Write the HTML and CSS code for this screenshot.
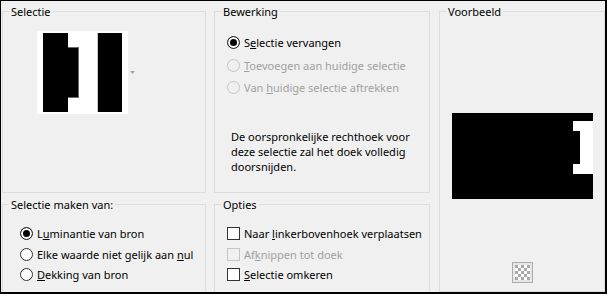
FILE: index.html
```html
<!DOCTYPE html>
<html lang="nl">
<head>
    <meta charset="UTF-8">
    <meta name="viewport" content="width=device-width, initial-scale=1.0">
    <title>Selectie uit masker</title>
    <link rel="stylesheet" href="styles.css">
</head>
<body>
    <div class="dialog">
        <div class="col col-left">
            <div class="group group-top">
                <div class="title">Selectie</div>
                <div class="thumb-row">
                    <svg class="thumb" width="91" height="83" viewBox="0 0 91 83">
                        <rect width="91" height="83" fill="#fff"/>
                        <rect x="6" y="2" width="25" height="79" fill="#000"/>
                        <rect x="31" y="16" width="11" height="51" fill="#6a6a6a"/>
                        <rect x="31" y="17" width="10" height="49" fill="#000"/>
                        <rect x="60" y="2" width="1" height="79" fill="#c8c8c8"/>
                        <rect x="61" y="2" width="24" height="79" fill="#000"/>
                    </svg>
                    <svg class="drop" width="5" height="3" viewBox="0 0 5 3">
                        <polygon points="0,0 5,0 2.5,3" fill="#a6a6a6"/>
                    </svg>
                </div>
            </div>
            <div class="group group-bottom">
                <div class="title">Selectie maken van:</div>
                <div class="list list-source">
                    <div class="opt"><span class="radio on"></span><span>L<u>u</u>minantie van bron</span></div>
                    <div class="opt"><span class="radio"></span><span>Elke waarde niet gelijk aan <u>n</u>ul</span></div>
                    <div class="opt"><span class="radio"></span><span><u>D</u>ekking van bron</span></div>
                </div>
            </div>
        </div>

        <div class="col col-mid">
            <div class="group group-top">
                <div class="title">Bewerking</div>
                <div class="list list-edit">
                    <div class="opt"><span class="radio on"></span><span>S<u>e</u>lectie vervangen</span></div>
                    <div class="opt off"><span class="radio"></span><span><u>T</u>oevoegen aan huidige selectie</span></div>
                    <div class="opt off"><span class="radio"></span><span>Van <u>h</u>uidige selectie aftrekken</span></div>
                </div>
                <p class="note">De oorspronkelijke rechthoek voor<br>deze selectie zal het doek volledig<br>doorsnijden.</p>
            </div>
            <div class="group group-bottom">
                <div class="title">Opties</div>
                <div class="list list-options">
                    <div class="opt"><span class="check"></span><span>Naar <u>l</u>inkerbovenhoek verplaatsen</span></div>
                    <div class="opt off"><span class="check"></span><span>Af<u>k</u>nippen tot doek</span></div>
                    <div class="opt"><span class="check"></span><span><u>S</u>electie omkeren</span></div>
                </div>
            </div>
        </div>

        <div class="col col-right">
            <div class="group group-preview">
                <div class="title">Voorbeeld</div>
                <svg class="preview" width="141" height="86" viewBox="0 0 141 86">
                    <rect width="141" height="86" fill="#000"/>
                    <rect x="121" y="8" width="20" height="53" fill="#fff"/>
                    <rect x="121" y="18" width="7" height="33" fill="#000"/>
                </svg>
                <svg class="checker" width="21" height="21" viewBox="0 0 21 21">
                    <rect x="0.5" y="0.5" width="20" height="20" fill="#e6e6e6" stroke="#adadad"/>
                    <rect x="3" y="3" width="15" height="15" fill="#fff"/>
                    <path d="M3 3h3v3H3zM9 3h3v3H9zM15 3h3v3h-3zM6 6h3v3H6zM12 6h3v3h-3zM3 9h3v3H3zM9 9h3v3H9zM15 9h3v3h-3zM6 12h3v3H6zM12 12h3v3h-3zM3 15h3v3H3zM9 15h3v3H9zM15 15h3v3h-3z" fill="#a9a9a9"/>
                </svg>
            </div>
        </div>
    </div>
</body>
</html>
```

FILE: styles.css
```css
/* Reset */
* {
    box-sizing: border-box;
    margin: 0;
    padding: 0;
}

body {
    background-color: #000;
    font-family: 'Noto Sans', 'Open Sans', sans-serif;
    font-size: 11px;
    color: #000;
}

/* Dialog */
.dialog {
    display: flex;
    width: 604px;
    height: 291px;
    margin: 1px 2px 2px 1px;
    padding: 10px 0 0 1px;
    background-color: #f0f0f0;
    overflow: hidden;
}

.col {
    display: flex;
    flex-direction: column;
    flex-shrink: 0;
}

.col-left {
    width: 204px;
}

.col-mid {
    width: 216px;
    margin-left: 8px;
}

.col-right {
    width: 166px;
    margin-left: 9px;
}

/* Group boxes */
.group {
    border: 1px solid #dcdcdc;
    flex-shrink: 0;
}

.group-top {
    height: 182px;
}

.group-bottom {
    height: 100px;
    margin-top: 11px;
}

.group-preview {
    height: 281px;
}

.title {
    width: fit-content;
    margin: -8px 0 0 6px;
    padding: 0 2px;
    line-height: 15px;
    background-color: #f0f0f0;
}

/* Selectie */
.thumb-row {
    display: flex;
    align-items: center;
    gap: 2px;
    margin-top: 12px;
    padding-left: 34px;
}

.thumb,
.drop,
.preview,
.checker {
    display: block;
}

/* Radio and check lists */
.list {
    display: flex;
    flex-direction: column;
}

.list-edit {
    margin-top: 16px;
    padding-left: 12px;
    gap: 7.5px;
}

.list-source {
    margin-top: 14px;
    padding-left: 17px;
    gap: 5.5px;
}

.list-options {
    margin-top: 14px;
    padding-left: 12px;
    gap: 5.5px;
}

.opt {
    display: flex;
    align-items: center;
    height: 15px;
    white-space: nowrap;
}

.opt u {
    text-underline-offset: 1px;
}

.radio,
.check {
    width: 13px;
    height: 13px;
    margin-right: 4px;
    border: 1px solid #333;
    background-color: #fff;
    flex-shrink: 0;
}

.radio {
    border-radius: 50%;
}

.radio.on {
    background-color: #000;
    box-shadow: inset 0 0 0 2px #fff;
}

.opt.off {
    color: #a0a0a0;
}

.opt.off .radio,
.opt.off .check {
    border-color: #c4c4c4;
    background-color: #f0f0f0;
}

.note {
    margin-top: 34px;
    padding-left: 16px;
    line-height: 15px;
}

/* Voorbeeld */
.preview {
    margin: 94px auto 0;
}

.checker {
    margin: 63px auto 0;
}
```
